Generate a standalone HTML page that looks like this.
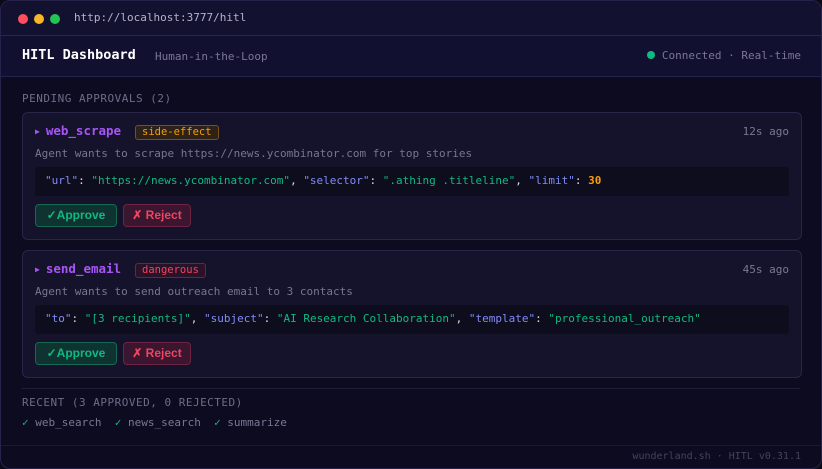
<!DOCTYPE html>
<html><head><meta charset="utf-8"><style>
*{box-sizing:border-box;margin:0;padding:0}
body{width:822px;height:469px;background:#0a0918;font-family:"DejaVu Sans Mono","Liberation Mono",monospace;font-size:11px;color:#8a879e;overflow:hidden;position:relative}
.win{position:absolute;left:0;top:0;width:822px;height:469px;border:1px solid #26234a;border-radius:10px;background:#0d0b1f;overflow:hidden}
.tb{position:absolute;left:0;top:0;right:0;height:35px;background:#131130;border-bottom:1px solid #27245a}
.dot{position:absolute;top:13px;width:10px;height:10px;border-radius:50%}
.url{position:absolute;left:73px;top:10px;color:#b5b3c8;font-size:11px}
.hd{position:absolute;left:0;right:0;top:35px;height:41px;background:#121030;border-bottom:1px solid #25224d}
.h1{position:absolute;left:21px;top:11px;color:#fff;font-weight:bold;font-size:13.5px}
.sub{position:absolute;left:154px;top:14px;color:#7a7794;font-size:11px}
.conn{position:absolute;right:20px;top:13px;color:#7a7794}
.conn i{display:inline-block;width:8px;height:8px;border-radius:50%;background:#10b981;margin-right:7px;vertical-align:0}
.lbl{position:absolute;left:21px;color:#6f6c88;letter-spacing:0.5px}
.card{position:absolute;left:21px;width:780px;height:128px;border:1px solid #282548;border-radius:6px;background:#15132b}
.name{position:absolute;left:12px;top:10px;color:#a855f7;font-weight:bold;font-size:12.5px}
.name small{font-size:8px;margin-right:6px;vertical-align:1px}
.tag{position:absolute;top:12px;left:112px;font-size:10.5px;padding:0 6px;height:15px;line-height:13px;border-radius:3px}
.time{position:absolute;right:12px;top:12px;color:#7a7794}
.desc{position:absolute;left:12px;top:34px;color:#78758f}
.code{position:absolute;left:12px;top:54px;width:754px;height:29px;background:#0e0d1d;border-radius:3px;padding:7px 10px;white-space:pre}
.k{color:#818cf8}.s{color:#10b981}.p{color:#ddd}.n{color:#f59e0b;font-weight:bold}
.btn{position:absolute;top:91px;height:23px;border-radius:4px;font-family:"Liberation Sans",sans-serif;font-weight:bold;font-size:12px;line-height:21px;text-align:center}
.ap{left:12px;width:82px;background:#0f3330;border:1px solid #146b52;color:#10b981}
.rj{left:100px;width:68px;background:#3a1630;border:1px solid #6e2340;color:#f0445f}
</style></head><body>
<div class="win">
<div class="tb">
<div class="dot" style="left:17px;background:#ff4f5e"></div>
<div class="dot" style="left:33px;background:#fbb52b"></div>
<div class="dot" style="left:49px;background:#23c552"></div>
<div class="url">http://localhost:3777/hitl</div>
</div>
<div class="hd">
<div class="h1">HITL Dashboard</div>
<div class="sub">Human-in-the-Loop</div>
<div class="conn"><i></i>Connected · Real-time</div>
</div>
<div class="lbl" style="top:91px">PENDING APPROVALS (2)</div>
<div class="card" style="top:111px">
<div class="name"><small>▶</small>web_scrape</div>
<div class="tag" style="color:#f59e0b;background:#2e2117;border:1px solid #7a5015">side-effect</div>
<div class="time">12s ago</div>
<div class="desc">Agent wants to scrape https://news.ycombinator.com for top stories</div>
<div class="code"><span class="k">"url"</span><span class="p">: </span><span class="s">"https://news.ycombinator.com"</span><span class="p">, </span><span class="k">"selector"</span><span class="p">: </span><span class="s">".athing .titleline"</span><span class="p">, </span><span class="k">"limit"</span><span class="p">: </span><span class="n">30</span></div>
<div class="btn ap">✓Approve</div>
<div class="btn rj">✗ Reject</div>
</div>
<div class="card" style="top:249px">
<div class="name"><small>▶</small>send_email</div>
<div class="tag" style="color:#f0445f;background:#2a1228;border:1px solid #6e2340">dangerous</div>
<div class="time">45s ago</div>
<div class="desc">Agent wants to send outreach email to 3 contacts</div>
<div class="code"><span class="k">"to"</span><span class="p">: </span><span class="s">"[3 recipients]"</span><span class="p">, </span><span class="k">"subject"</span><span class="p">: </span><span class="s">"AI Research Collaboration"</span><span class="p">, </span><span class="k">"template"</span><span class="p">: </span><span class="s">"professional_outreach"</span></div>
<div class="btn ap">✓Approve</div>
<div class="btn rj">✗ Reject</div>
</div>
<div style="position:absolute;left:21px;right:21px;top:387px;border-top:1px solid #1f1d3a"></div>
<div class="lbl" style="top:395px">RECENT (3 APPROVED, 0 REJECTED)</div>
<div style="position:absolute;left:21px;top:415px;color:#7a7794;white-space:pre"><span class="s">✓</span> web_search  <span class="s">✓</span> news_search  <span class="s">✓</span> summarize</div>
<div style="position:absolute;left:0;right:0;top:444px;border-top:1px solid #1b1935"></div>
<div style="position:absolute;right:20px;top:450px;color:#45425e;font-size:10px">wunderland.sh · HITL v0.31.1</div>
</div>
</body></html>
